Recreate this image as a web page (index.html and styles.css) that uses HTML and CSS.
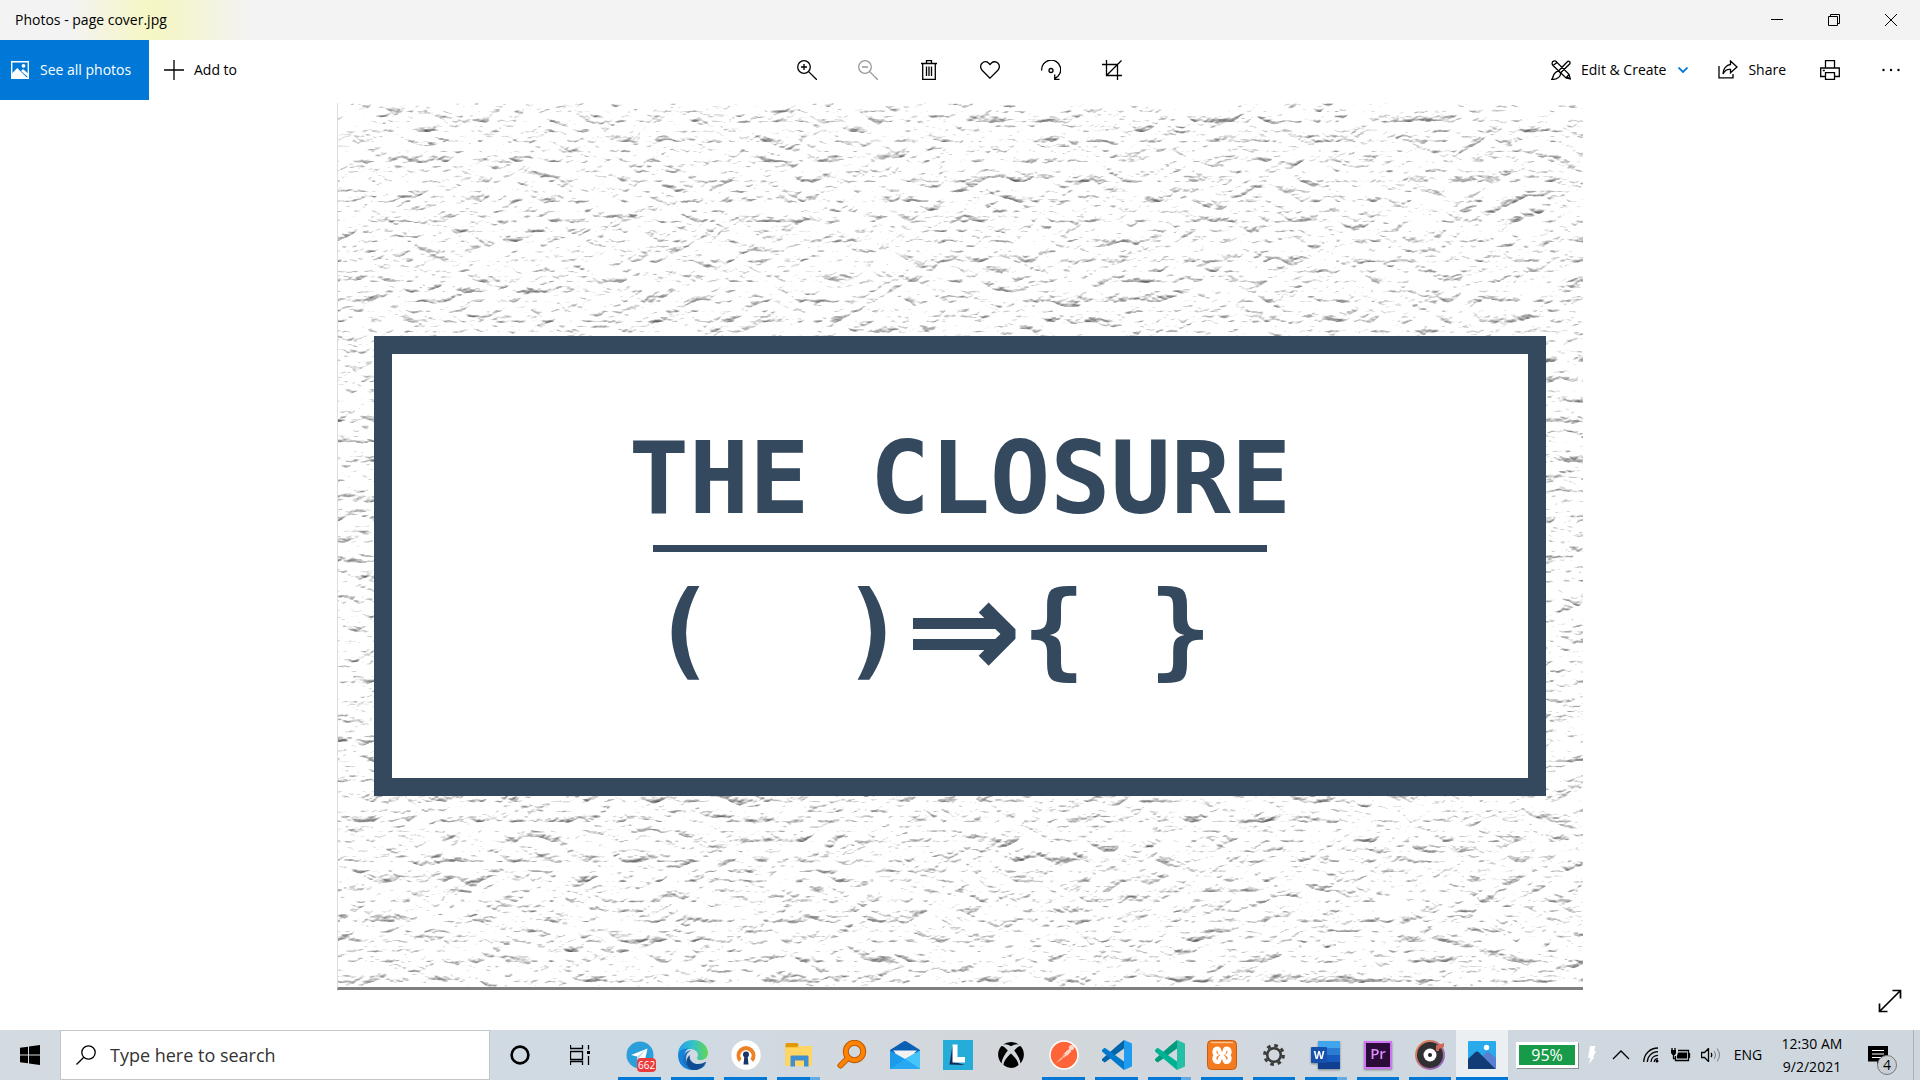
FILE: index.html
```html
<!DOCTYPE html>
<html lang="en">
<head>
<meta charset="utf-8">
<title>Photos - page cover.jpg</title>
<link rel="stylesheet" href="styles.css">
</head>
<body>
<header class="titlebar">
  <h1 class="titlebar-name">Photos - page cover.jpg</h1>
  <div class="window-controls">
    <button class="window-button" aria-label="Minimize"><svg width="12" height="12" viewBox="0 0 12 12"><path d="M0 5.500h12" class="line"/></svg></button>
    <button class="window-button" aria-label="Restore"><svg width="12" height="12" viewBox="0 0 12 12"><path d="M.5 2.500h9v9h-9zM2.500 2.500v-2h9v9h-2" class="line"/></svg></button>
    <button class="window-button" aria-label="Close"><svg width="12" height="12" viewBox="0 0 12 12"><path d="M0 0l12 12M12 0L0 12" class="line"/></svg></button>
  </div>
</header>

<div class="toolbar">
  <div class="toolbar-side">
    <button class="see-all">
      <svg width="18" height="18" viewBox="0 0 18 18"><path d="M.7.700h16.600v16.600H.7z" fill="none" stroke="#fff" stroke-width="1.400"/><path d="M1 12.500L6.200 7 16.500 17.300H1z" fill="#fff"/><path d="M10 10l2-2 5.500 5v3.500z" fill="#fff"/><circle cx="12.500" cy="4.800" r="1.900" fill="#fff"/></svg>
      See all photos
    </button>
    <button class="tool add-to">
      <svg width="20" height="20" viewBox="0 0 20 20"><path d="M10 0v20M0 10h20" class="line"/></svg>
      Add to
    </button>
  </div>
  <div class="toolbar-center">
    <button class="tool-icon" aria-label="Zoom in"><svg width="20" height="20" viewBox="0 0 20 20"><circle cx="7" cy="7" r="6.300" class="line"/><path d="M11.600 11.600L20 20M4 7h6M7 4v6" class="line"/></svg></button>
    <button class="tool-icon tool-icon-off" aria-label="Zoom out" disabled><svg width="20" height="20" viewBox="0 0 20 20"><circle cx="7" cy="7" r="6.300" class="line"/><path d="M11.600 11.600L20 20M4 7h6" class="line"/></svg></button>
    <button class="tool-icon" aria-label="Delete"><svg width="20" height="20" viewBox="0 0 20 20"><path d="M2 3.500h16M7.500 3V.700h5V3M3.700 4v15.300h12.600V4M7.500 6.500v9.500M10 6.500v9.500M12.500 6.500v9.500" class="line"/></svg></button>
    <button class="tool-icon" aria-label="Favorite"><svg width="20" height="20" viewBox="0 0 20 20"><path d="M10 18.200L1.900 10C.2 8.100.2 5 2 3.200 4 1.300 6.800 1.300 8.500 3L10 4.500 11.500 3c1.700-1.700 4.600-1.700 6.500.200 1.800 1.800 1.800 4.900.100 6.800z" class="line"/></svg></button>
    <button class="tool-icon" aria-label="Rotate"><svg width="20" height="20" viewBox="0 0 20 20"><path d="M.7 10.500A9.500 9.500 0 1 1 14 18.300M13.700 14.500v4.800h4.800" class="line"/><circle cx="10" cy="10.500" r="2" class="line"/></svg></button>
    <button class="tool-icon" aria-label="Crop"><svg width="20" height="20" viewBox="0 0 20 20"><path d="M0 4.500h15.500V20M4.500 0v15.500H20M4.500 15.500L19.500.500" class="line"/></svg></button>
  </div>
  <div class="toolbar-side toolbar-end">
    <button class="tool">
      <svg width="20" height="20" viewBox="0 0 20 20"><path d="M2 5.500C.5 4 1 1.700 2.500 1.200 4 .6 5.500 1 6 2.500l12 11.800L19.300 19 15 18zM2 5.500l4-3M15 18l3-3.700M7.500 11L16.500 1.500c1.500-1 3.300.8 2.300 2.300L9.500 13M7.500 11l2 2c.5 3-2.500 6.500-8.800 6.500C2.500 17.500 1.500 15.500 4 13c1-1 2-1.700 3.500-2z" class="line"/><path d="M16.500 16l2.800 3-4-1z"/></svg>
      Edit &amp; Create
      <svg class="tool-arrow" width="10" height="6" viewBox="0 0 10 6"><path d="M.5.500L5 5 9.500.500" fill="none" stroke="#0078d7" stroke-width="1.800"/></svg>
    </button>
    <button class="tool">
      <svg width="20" height="20" viewBox="0 0 20 20"><path d="M1 6v11.800h14V14M12.500 1l6.500 6-6.500 5.800V9.500C9 9 6.500 11 5 14c0-5.500 3.500-9 7.500-9.500z" class="line"/></svg>
      Share
    </button>
    <button class="tool-icon tool-print" aria-label="Print"><svg width="20" height="20" viewBox="0 0 20 20"><path d="M5.500 8V.700h9V8M5.500 16.500H.7V8h18.600v8.500h-4.800M5.500 12.700h9v6.600h-9zM2.800 10.500h2" class="line"/></svg></button>
    <button class="tool-icon tool-more" aria-label="See more"><svg width="18" height="4" viewBox="0 0 18 4"><circle cx="1.500" cy="2" r="1.200"/><circle cx="9" cy="2" r="1.200"/><circle cx="16.500" cy="2" r="1.200"/></svg></button>
  </div>
</div>

<main class="stage">
  <figure class="photo">
    <svg class="photo-texture" aria-hidden="true">
      <filter id="plaster" x="0" y="0" width="100%" height="100%" color-interpolation-filters="sRGB">
        <feTurbulence type="turbulence" baseFrequency="0.028 0.05" numOctaves="5" seed="11"/>
        <feDiffuseLighting surfaceScale="4" diffuseConstant="1.200" lighting-color="#fff"><feDistantLight azimuth="258" elevation="52"/></feDiffuseLighting>
        <feComponentTransfer><feFuncR type="linear" slope="0.850" intercept="0.380"/><feFuncG type="linear" slope="0.850" intercept="0.380"/><feFuncB type="linear" slope="0.850" intercept="0.380"/></feComponentTransfer>
      </filter>
      <rect width="100%" height="100%" filter="url(#plaster)"/>
    </svg>
    <div class="sign">
      <p class="sign-title">THE CLOSURE</p>
      <hr class="sign-rule">
      <p class="sign-code">(&nbsp; )<span class="sign-arrow">⇒</span>{ }</p>
    </div>
  </figure>
  <button class="fullscreen" aria-label="Full screen"><svg width="24" height="24" viewBox="0 0 24 24"><path d="M1.500 22.500l21-21M14.500 1.500h8v8M1.500 14.500v8h8" fill="none" stroke="#000" stroke-width="1.700"/></svg></button>
</main>

<footer class="taskbar">
  <button class="start" aria-label="Start"><svg width="20" height="20" viewBox="0 0 20 20"><path d="M0 2.800L8 1.700V9.500H0zM9 1.500L20 0v9.500H9zM0 10.500h8v7.800L0 17.200zM9 10.500h11V20L9 18.500z"/></svg></button>
  <label class="search">
    <svg width="20" height="20" viewBox="0 0 20 20"><circle cx="12.500" cy="7.500" r="6.700" class="line"/><path d="M7.800 12.200L.5 19.500" class="line"/></svg>
    <input class="search-input" type="text" placeholder="Type here to search" aria-label="Type here to search">
  </label>
  <button class="shell-button" aria-label="Cortana"><svg width="20" height="20" viewBox="0 0 20 20"><circle cx="10" cy="10" r="8.400" fill="none" stroke="#000" stroke-width="2.600"/></svg></button>
  <button class="shell-button" aria-label="Task view"><svg width="20" height="20" viewBox="0 0 20 20"><path d="M.5 0v3.500h12V0M.5 6.500h12v8H.5zM.5 20v-3.500h12V20M18.500 0v4.500M18.500 11v9" class="line"/><path d="M17 6h3v3h-3z"/></svg></button>

  <nav class="apps" aria-label="Running apps">
    <button class="app app-open" aria-label="Telegram">
      <svg width="28" height="28" viewBox="0 0 28 28"><circle cx="14" cy="14" r="13.500" fill="#2a9fd9"/><path d="M5 14L21.500 7.500 18.500 21 13.500 17.300 11 20v-4.500z" fill="#fff"/><path d="M11 15.500l8-6-6 7.500-2 3z" fill="#bcd9ec"/></svg>
      <span class="app-badge">662</span>
    </button>
    <button class="app app-open" aria-label="Edge">
      <svg width="30" height="30" viewBox="0 0 30 30"><defs><linearGradient id="edge-top" x2="1"><stop stop-color="#1f9fe8"/><stop offset=".5" stop-color="#35c1c9"/><stop offset="1" stop-color="#62d651"/></linearGradient></defs><path d="M0 15C0 6 6.500 0 15 0s15 6 15 13c0 4.500-3.500 7-7.500 7-3.500 0-4-1.500-3-3 2-4-2-8-7-8C6 9 1 12 0 15z" fill="url(#edge-top)"/><path d="M0 15C1 10 6 8 11 8.500c-5 2-6 9-3 14 2 3.500 5.500 6 9 7.300C6 31 0 24 0 15z" fill="#1683d8"/><path d="M13 10.500c-6 2.500-6.500 11-1 15.500 3.500 2.800 9 3.500 16-2-3 4-7 6-13 6C8 28.500 4.500 22 5.500 17c.7-4 4-6.500 7.500-6.500z" fill="#1a70bd"/><path d="M12 15c-1.500 5 3 9 8 9 3 0 5-1 7.500-2 .5 0 .8.300.5.800C24 29 18 31.500 13 29.500 8 27 7 18 12 15z" fill="#0f4c94"/></svg>
    </button>
    <button class="app app-open" aria-label="OpenVPN">
      <svg width="30" height="30" viewBox="0 0 30 30"><circle cx="15" cy="15" r="14.700" fill="#fff"/><path d="M8 22A9.500 9.500 0 1 1 22 22l-2.500-3.200a5.500 5.500 0 1 0-9 0z" fill="#ec8226"/><circle cx="15" cy="14.500" r="3" fill="#1b3564"/><path d="M13.500 15h3l1 9.500h-5z" fill="#1b3564"/></svg>
    </button>
    <button class="app app-open app-multi" aria-label="File Explorer">
      <svg width="28" height="26" viewBox="0 0 28 26"><path d="M.5 2.500h12l2 2.500h12.500v19H.5z" fill="#f9c840"/><path d="M.5 2.500c0-1 .5-1.500 1.500-1.500h10c1 0 1.500 1 1.500 2l-1.500 2H.5z" fill="#e19a05"/><path d="M.5 6h13l2-2H27v20H.5z" fill="#ffd663"/><path d="M5.500 24.500V15c0-1.200.5-1.500 1.500-1.500h15c1 0 1.500.5 1.500 1.500v9.500H19V18.500h-9v6z" fill="#3f8ed0"/></svg>
    </button>
    <button class="app" aria-label="Search tool">
      <svg width="30" height="30" viewBox="0 0 30 30"><circle cx="17.500" cy="11.500" r="8.700" fill="none" stroke="#bb5706" stroke-width="6"/><path d="M11 18L3.500 25.500" stroke="#bb5706" stroke-width="6" stroke-linecap="round"/><circle cx="17.500" cy="11.500" r="8.700" fill="none" stroke="#ff8200" stroke-width="4"/><path d="M11.500 17.500l-8 8" stroke="#ff8200" stroke-width="4" stroke-linecap="round"/></svg>
    </button>
    <button class="app" aria-label="Mail">
      <svg width="30" height="28" viewBox="0 0 30 28"><path d="M0 9L13 .7q2-1.200 4 0L30 9v3H0z" fill="#0960b3"/><path d="M3 9.500h24L16 20h-3z" fill="#f3f3f3"/><path d="M0 9.500L15 18 30 9.500V28H0z" fill="#1b9bea"/><path d="M15 18L30 9.500V28z" fill="#45c5fa"/><path d="M15 18L30 28H0z" fill="#28a8f1"/></svg>
    </button>
    <button class="app" aria-label="Lightshot">
      <svg width="30" height="30" viewBox="0 0 30 30"><path d="M0 0h30v30H0z" fill="#25acd9"/><path d="M9.500 5L6.500 24.500l15.500.500-11-3z" fill="#102b55"/><path d="M9.500 4.500h5v12.500h7.500v5.500H9.500z" fill="#fff"/></svg>
    </button>
    <button class="app" aria-label="Xbox">
      <svg width="26" height="26" viewBox="0 0 26 26"><path d="M5 2.500Q9 1.500 13 4.300 17 1.500 21 2.500 17.500 0 13 0T5 2.500zM3.500 4C-.5 8-1.500 15.500 3.500 21.500 4 16.500 7 12 9.800 8.500 7.500 6 5.500 4 3.500 4zM22.500 4c4 4 5 11.500 0 17.500-.5-5-3.500-9.500-6.300-13 2.300-2.500 4.300-4.500 6.300-4.500zM13 11.500c4 3.500 7.500 8 7.500 11.500Q17 26 13 26t-7.500-3c0-3.500 3.500-8 7.500-11.500z"/></svg>
    </button>
    <button class="app app-open" aria-label="Postman">
      <svg width="30" height="30" viewBox="0 0 30 30"><circle cx="15" cy="15" r="14" fill="#ff6338" stroke="#fff" stroke-width="1.500"/><path d="M6.500 23.500l6-6 3-4.500 5-4.500 2 2.500-4.500 5-5 3z" fill="#ffd5c8"/><circle cx="22.500" cy="7.500" r="2.600" fill="#ffd5c8"/><path d="M16 14l-3.500 4M18 15.500L13 19" stroke="#ff6338" stroke-width=".8"/></svg>
    </button>
    <button class="app app-open" aria-label="Visual Studio Code">
      <svg width="30" height="30" viewBox="0 0 30 30"><path d="M22 0l-6 5L0 19c-.5.500-.5 1 0 1.500L2 22c.5.500 1 .5 1.500 0L22 8.500z" fill="#0065a9"/><path d="M22 30l-6-5L0 11.500c-.5-.5-.5-1 0-1.500l2-1.700c.5-.4 1-.4 1.500 0L22 21.500z" fill="#007acc"/><path d="M22 0l7 3c.7.300 1 .7 1 1.500v21c0 .8-.3 1.200-1 1.500l-7 3z" fill="#1f9cf0"/></svg>
    </button>
    <button class="app app-open app-multi" aria-label="Visual Studio Code Insiders">
      <svg width="30" height="30" viewBox="0 0 30 30"><path d="M22 0l-6 5L0 19c-.5.500-.5 1 0 1.500L2 22c.5.500 1 .5 1.500 0L22 8.500z" fill="#009a7c"/><path d="M22 30l-6-5L0 11.500c-.5-.5-.5-1 0-1.500l2-1.700c.5-.4 1-.4 1.500 0L22 21.500z" fill="#00b294"/><path d="M22 0l7 3c.7.300 1 .7 1 1.500v21c0 .8-.3 1.200-1 1.500l-7 3z" fill="#24bfa5"/></svg>
    </button>
    <button class="app app-open" aria-label="XAMPP">
      <svg width="30" height="30" viewBox="0 0 30 30"><rect x=".5" y=".5" width="29" height="29" rx="4" fill="#f47b20" stroke="#c45f12"/><path d="M4 2.500h22" stroke="#ffc08a" stroke-width="1.500"/><path d="M10.500 8.500c3 0 1 5.500 4.500 5.500s1.500-5.500 4.500-5.500 4.500 4 1.500 6.500c3 2.500 1.500 7-1.500 7s-1-5-4.500-5-1.500 5-4.500 5-4.500-4.500-1.500-7C6 12.500 7.500 8.500 10.500 8.500z" fill="none" stroke="#fff" stroke-width="4"/></svg>
    </button>
    <button class="app app-open" aria-label="Settings">
      <svg width="22" height="22" viewBox="0 0 22 22"><circle cx="11" cy="11" r="6.800" fill="none" stroke="#3b3b3b" stroke-width="2.600"/><circle cx="11" cy="11" r="9.400" fill="none" stroke="#3b3b3b" stroke-width="3" stroke-dasharray="3.600 3.780"/></svg>
    </button>
    <button class="app app-open app-multi" aria-label="Word">
      <svg class="app-tile" width="30" height="28" viewBox="0 0 30 28"><path d="M7 0h22v28H7z" fill="#2b7cd3"/><path d="M7 0h22v7H7z" fill="#41a5ee"/><path d="M7 14h22v7H7z" fill="#185abd"/><path d="M7 21h22v7H7z" fill="#103f91"/><rect y="6" width="16" height="16" rx="1" fill="#1551ad"/><text x="8" y="18" class="glyph-word">W</text></svg>
    </button>
    <button class="app app-open" aria-label="Premiere Pro">
      <svg class="app-tile" width="28" height="28" viewBox="0 0 28 28"><path d="M1 1h26v26H1z" fill="#2b0b38" stroke="#cf74f2" stroke-width="2"/><text x="14" y="18" class="glyph-pr">Pr</text></svg>
    </button>
    <button class="app app-open" aria-label="Music">
      <svg width="30" height="30" viewBox="0 0 30 30"><defs><linearGradient id="music-ring" x2="1" y2="1"><stop stop-color="#f0883e"/><stop offset="1" stop-color="#8560d0"/></linearGradient></defs><circle cx="15" cy="15" r="15" fill="url(#music-ring)"/><circle cx="15" cy="15" r="13" fill="#303033"/><circle cx="15" cy="15" r="6.500" fill="#fff"/><circle cx="15" cy="15" r="2" fill="#222"/><path d="M21 11V5.500L29 3v4l-5 2v2z" fill="#d1695a"/></svg>
    </button>
    <button class="app app-open app-active" aria-label="Photos">
      <svg width="28" height="28" viewBox="0 0 28 28"><rect width="28" height="28" rx="1" fill="#29aaea"/><path d="M12 18l7.500-8 8.500 7v11H12z" fill="#5b7fd0"/><path d="M0 18L7.500 11q1.500-1 3 0L27.500 28H0z" fill="#123c75"/><circle cx="18.500" cy="6.500" r="2.700" fill="#fff"/></svg>
    </button>
  </nav>

  <div class="tray">
    <div class="charge"><span class="charge-level">95%</span></div>
    <svg class="charge-bolt" width="8" height="18" viewBox="0 0 8 18"><path d="M2 0h5.500L6 5h2L5 11h1.500L1 18l1.500-6H0z" fill="#fff"/></svg>
    <button class="tray-button" aria-label="Show hidden icons"><svg width="18" height="10" viewBox="0 0 18 10"><path d="M1 9l8-8 8 8" class="line"/></svg></button>
    <button class="tray-button" aria-label="Network"><svg width="16" height="16" viewBox="0 0 16 16"><path d="M.7 15C1 7 7 1 15 1M4.300 15C4.500 9 9 4.700 15 4.700M8 15c.2-4 3-6.700 7-6.700M11.200 15c.2-2 1.500-3.300 3.800-3.300" class="line"/><circle cx="14" cy="14" r="1.500"/></svg></button>
    <button class="tray-button" aria-label="Battery"><svg width="20" height="14" viewBox="0 0 20 14"><path d="M7 2.500h10.500v10H4.500V8M18.500 5v5M2.500 7v3.500h2M1 0v2M4 0v2" class="line"/><path d="M0 2h5v3L4 7H1.500L0 5zM7 4.500h9v6H6V8z"/></svg></button>
    <button class="tray-button" aria-label="Volume"><svg width="20" height="14" viewBox="0 0 20 14"><path d="M.5 4.500h3l4-4v13l-4-4h-3zM10 5q1.500 2 0 4" class="line"/><path d="M13 3q3 4 0 8M16 .5q5 6.500 0 13" fill="none" stroke="#858b90" stroke-width="1.200"/></svg></button>
    <button class="language">ENG</button>
    <button class="clock"><span>12:30 AM</span><span>9/2/2021</span></button>
    <button class="notifications" aria-label="Notifications">
      <svg width="20" height="19" viewBox="0 0 20 19"><path d="M0 0h20v15.500h-7.500l-3.500 3v-3H0z"/><path d="M4 4.500h12M4 8h12M4 11.500h12" stroke="#fff" stroke-width="1.200"/></svg>
      <span class="notifications-count">4</span>
    </button>
  </div>
</footer>
</body>
</html>
```
FILE: styles.css
```css
* {
  box-sizing: border-box;
}

body {
  display: flex;
  flex-direction: column;
  height: 100vh;
  margin: 0;
  overflow: hidden;
  background: #fff;
  color: #000;
  font: 14px/20px "Open Sans", "Noto Sans", sans-serif;
}

button {
  display: flex;
  align-items: center;
  justify-content: center;
  padding: 0;
  border: 0;
  background: none;
  color: inherit;
  font: inherit;
  white-space: nowrap;
}

svg {
  display: block;
  flex: none;
}

.line {
  fill: none;
  stroke: currentColor;
  stroke-width: 1.3;
}

/* Title bar */
.titlebar {
  display: flex;
  flex: none;
  align-items: center;
  justify-content: space-between;
  height: 40px;
  padding: 0 1px 0 15px;
  background: linear-gradient(90deg, transparent 70px, #f6f6c6 145px, #f4f5c9 170px, transparent 250px), #f3f3f3;
}

.titlebar-name {
  margin: 0;
  font-size: 14px;
  font-weight: 400;
}

.window-controls {
  display: flex;
  height: 100%;
}

.window-button {
  width: 57px;
}

.window-button .line {
  stroke-width: 1;
}

/* Command bar */
.toolbar {
  display: grid;
  flex: none;
  grid-template-columns: 1fr auto 1fr;
  height: 60px;
}

.toolbar-side,
.toolbar-center {
  display: flex;
}

.toolbar-center {
  padding-right: 2px;
}

.toolbar-end {
  justify-content: flex-end;
}

.see-all {
  gap: 11px;
  justify-content: flex-start;
  width: 149px;
  padding-left: 11px;
  background: #0078d7;
  color: #fff;
}

.tool {
  gap: 10px;
  padding: 0 12px;
}

.add-to {
  padding: 0 15px;
}

.tool-arrow {
  margin: 0 6px 0 2px;
}

.tool-icon {
  width: 61px;
}

.tool-icon-off {
  color: #999;
}

.tool-print {
  width: 64px;
}

.tool-more {
  width: 58px;
}

/* Picture */
.stage {
  position: relative;
  display: flex;
  flex: 1;
  justify-content: center;
  min-height: 0;
  padding: 3px 0 40px;
}

.photo {
  display: grid;
  grid-template-rows: 233fr 460fr 191fr;
  grid-template-columns: 36fr 1172fr 37fr;
  aspect-ratio: 1246 / 887;
  height: 100%;
  margin: 0;
  border-bottom: 3px solid #7f7f7f;
  border-left: 1px solid #ddd;
}

.photo-texture {
  grid-area: 1 / 1 / -1 / -1;
  width: 100%;
  height: 100%;
}

.sign {
  z-index: 1;
  display: flex;
  grid-area: 2 / 2;
  flex-direction: column;
  align-items: center;
  justify-content: center;
  min-height: 0;
  padding-bottom: 24px;
  border: 18px solid #34495e;
  background: #fff;
  color: #34495e;
  font: 700 100px/120px "DejaVu Sans Mono", monospace;
}

.sign p {
  margin: 0;
  white-space: pre;
}

.sign-rule {
  width: 614px;
  height: 7px;
  margin: 6px 0 18px;
  border: 0;
  background: #34495e;
}

.sign-code {
  display: flex;
  align-items: center;
  padding-right: 56px;
  font-size: 105px;
}

.sign-arrow {
  font: 700 140px/120px "DejaVu Sans", sans-serif;
}

.fullscreen {
  position: absolute;
  right: 18px;
  bottom: 17px;
}

/* Taskbar */
.taskbar {
  display: flex;
  flex: none;
  height: 50px;
  background: linear-gradient(90deg, #d3dae0, #d0dae3 35%, #d3d7db 52%, #cfd8e0 75%, #cfd7de);
}

.start {
  width: 60px;
}

.search {
  display: flex;
  align-items: center;
  gap: 14px;
  width: 430px;
  padding: 0 15px;
  border: 1px solid #c3c6c9;
  background: #fff;
}

.search-input {
  flex: 1;
  min-width: 0;
  padding: 0;
  border: 0;
  outline: 0;
  background: none;
  color: #333;
  font: 18px/24px "Open Sans", "Noto Sans", sans-serif;
}

.search-input::placeholder {
  color: #333;
  opacity: 1;
}

.shell-button {
  width: 60px;
}

.apps {
  display: grid;
  flex: none;
  grid-template-columns: repeat(11, 53px) repeat(6, 52px);
  margin-left: 3px;
}

.app {
  position: relative;
}

.app-open::after {
  position: absolute;
  right: 5px;
  bottom: 0;
  left: 5px;
  height: 3px;
  background: #0078d7;
  content: "";
}

.app-multi::after {
  background: linear-gradient(270deg, #62aae4 10px, #0078d7 10px);
}

.app-active {
  background: #ebeff2;
}

.app-active::after {
  right: 0;
  left: 0;
}

.app-tile {
  filter: drop-shadow(0 1px 1px #0006);
}

.app-badge {
  position: absolute;
  top: 28px;
  left: 24px;
  padding: 0 1px;
  border-radius: 4px;
  background: #ec3b3b;
  color: #fff;
  font-size: 10px;
  line-height: 14px;
}

.glyph-word {
  fill: #fff;
  font: 700 11px "Open Sans", sans-serif;
  text-anchor: middle;
}

.glyph-pr {
  fill: #dc8cfb;
  font: 600 15px "Open Sans", sans-serif;
  text-anchor: middle;
}

/* Tray */
.tray {
  display: flex;
  flex: 1;
  align-items: center;
  padding: 0 5px 0 8px;
}

.tray::after {
  width: 1px;
  height: 100%;
  margin-left: 11px;
  background: #a9b0b6;
  content: "";
}

.tray > * {
  flex: none;
}

.charge {
  padding: 3px;
  background: #fff;
  box-shadow: 1px 1px 0 #8a9095;
}

.charge-level {
  display: block;
  width: 56px;
  background: #189b48;
  color: #fff;
  font-size: 16px;
  line-height: 20px;
  text-align: center;
}

.charge-bolt {
  margin: 0 10px;
}

.tray-button {
  width: 30px;
}

.language {
  width: 44px;
}

.clock {
  flex-direction: column;
  gap: 3px;
  width: 84px;
}

.notifications {
  position: relative;
  width: 48px;
  height: 100%;
}

.notifications-count {
  position: absolute;
  top: 25px;
  left: 23px;
  width: 20px;
  border: 1px solid #777;
  border-radius: 50%;
  background: #c9cfd4;
  font-size: 14px;
  line-height: 18px;
  text-align: center;
}
```
